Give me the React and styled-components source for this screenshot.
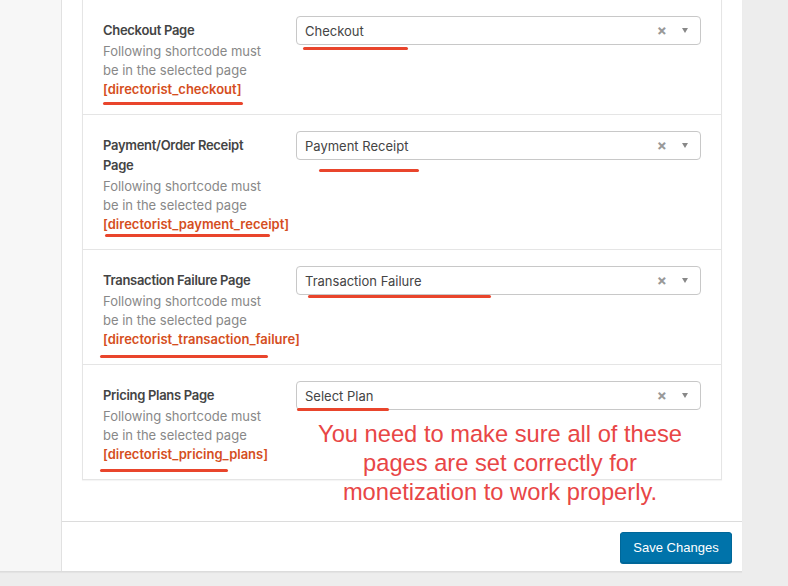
import React from 'react';
import styled, { createGlobalStyle } from 'styled-components';

const GlobalStyle = createGlobalStyle`
  html, body {
    margin: 0;
    padding: 0;
    background: #ededed;
  }
  body {
    font-family: Inter, "Noto Sans", sans-serif;
    -webkit-font-smoothing: antialiased;
  }
`;

const Screen = styled.div`
  width: 788px;
  height: 586px;
  overflow: hidden;
  background: #ededed;
`;

const Frame = styled.div`
  display: flex;
  width: 742px;
  height: 572px;
  box-sizing: border-box;
  border-bottom: 1px solid #dcdcdc;
  box-shadow: 0 1px 1px rgba(0, 0, 0, 0.04);
`;

const Sidebar = styled.aside`
  width: 61px;
  flex: none;
  background: #f7f7f7;
  border-right: 1px solid #e1e1e1;
`;

const Main = styled.main`
  position: relative;
  flex: 1;
  display: flex;
  flex-direction: column;
  background: #fff;
`;

const Body = styled.div`
  flex: 1;
  padding: 0 20px;
`;

const Card = styled.div`
  margin-top: -1px;
  border: 1px solid #e5e5e5;
  box-shadow: 0 1px 1px rgba(0, 0, 0, 0.04);
`;

const Row = styled.div`
  position: relative;
  display: grid;
  grid-template-columns: 193px 1fr;
  align-items: start;
  padding: 20px 20px 15px 20px;
  & + & {
    border-top: 1px solid #e5e5e5;
  }
`;

const Head = styled.div`
  max-width: 165px;
`;

const Label = styled.div`
  font-size: 13px;
  font-weight: 600;
  letter-spacing: -0.3px;
  line-height: 20px;
  color: #444;
`;

const Desc = styled.div`
  margin-top: 2px;
  font-size: 13px;
  line-height: 19px;
  color: #888;
`;

const Code = styled.div`
  font-weight: 600;
  color: #d54e21;
  white-space: nowrap;
`;

const Select = styled.div`
  display: flex;
  align-items: center;
  height: 29px;
  margin-top: -4px;
  box-sizing: border-box;
  padding: 0 8px;
  border: 1px solid #c8c8c8;
  border-radius: 4px;
  background: #fff;
  font-size: 13px;
  color: #444;
`;

const Value = styled.span`
  flex: 1;
`;

const Clear = styled.span`
  font-size: 15px;
  font-weight: 700;
  color: #999;
  margin-right: 15px;
`;

const Arrow = styled.span`
  width: 0;
  height: 0;
  border-left: 3.5px solid transparent;
  border-right: 3.5px solid transparent;
  border-top: 5px solid #888;
  margin-right: 4px;
`;

const Mark = styled.span`
  position: absolute;
  left: ${(p) => p.$x}px;
  top: ${(p) => p.$y}px;
  width: ${(p) => p.$w}px;
  height: 3px;
  border-radius: 2px;
  background: #e9452c;
`;

const Note = styled.div`
  position: absolute;
  left: 228px;
  top: 420px;
  width: 420px;
  text-align: center;
  font-family: "Liberation Sans", Arial, sans-serif;
  font-size: 23.7px;
  line-height: 29px;
  color: #e84646;
`;

const Footer = styled.div`
  display: flex;
  justify-content: flex-end;
  height: 50px;
  box-sizing: border-box;
  padding: 10px 10px 0;
  border-top: 1px solid #dcdcdc;
`;

const Button = styled.button`
  width: 112px;
  height: 31px;
  border: 1px solid #006799;
  border-radius: 3px;
  background: #0073aa;
  box-shadow: 0 1px 0 #006799;
  color: #fff;
  font-family: "Liberation Sans", Arial, sans-serif;
  font-size: 13px;
`;

const rows = [
  {
    label: 'Checkout Page',
    code: '[directorist_checkout]',
    value: 'Checkout',
    marks: [
      [220, 47, 105],
      [20, 102, 140],
    ],
  },
  {
    label: 'Payment/Order Receipt Page',
    code: '[directorist_payment_receipt]',
    value: 'Payment Receipt',
    marks: [
      [236, 54, 100],
      [22, 119, 165],
    ],
  },
  {
    label: 'Transaction Failure Page',
    code: '[directorist_transaction_failure]',
    value: 'Transaction Failure',
    marks: [
      [225, 45, 183],
      [17, 105, 168],
    ],
  },
  {
    label: 'Pricing Plans Page',
    code: '[directorist_pricing_plans]',
    value: 'Select Plan',
    marks: [
      [214, 43, 92],
      [17, 104, 128],
    ],
  },
];

export default function App() {
  return (
    <Screen>
      <GlobalStyle />
      <Frame>
        <Sidebar />
        <Main>
          <Body>
            <Card>
              {rows.map((row) => (
                <Row key={row.code}>
                  <Head>
                    <Label>{row.label}</Label>
                    <Desc>
                      Following shortcode must be in the selected page
                      <Code>{row.code}</Code>
                    </Desc>
                  </Head>
                  <Select>
                    <Value>{row.value}</Value>
                    <Clear>×</Clear>
                    <Arrow />
                  </Select>
                  {row.marks.map(([x, y, w]) => (
                    <Mark key={y} $x={x} $y={y} $w={w} />
                  ))}
                </Row>
              ))}
            </Card>
          </Body>
          <Footer>
            <Button>Save Changes</Button>
          </Footer>
          <Note>
            You need to make sure all of these
            <br />
            pages are set correctly for
            <br />
            monetization to work properly.
          </Note>
        </Main>
      </Frame>
    </Screen>
  );
}
